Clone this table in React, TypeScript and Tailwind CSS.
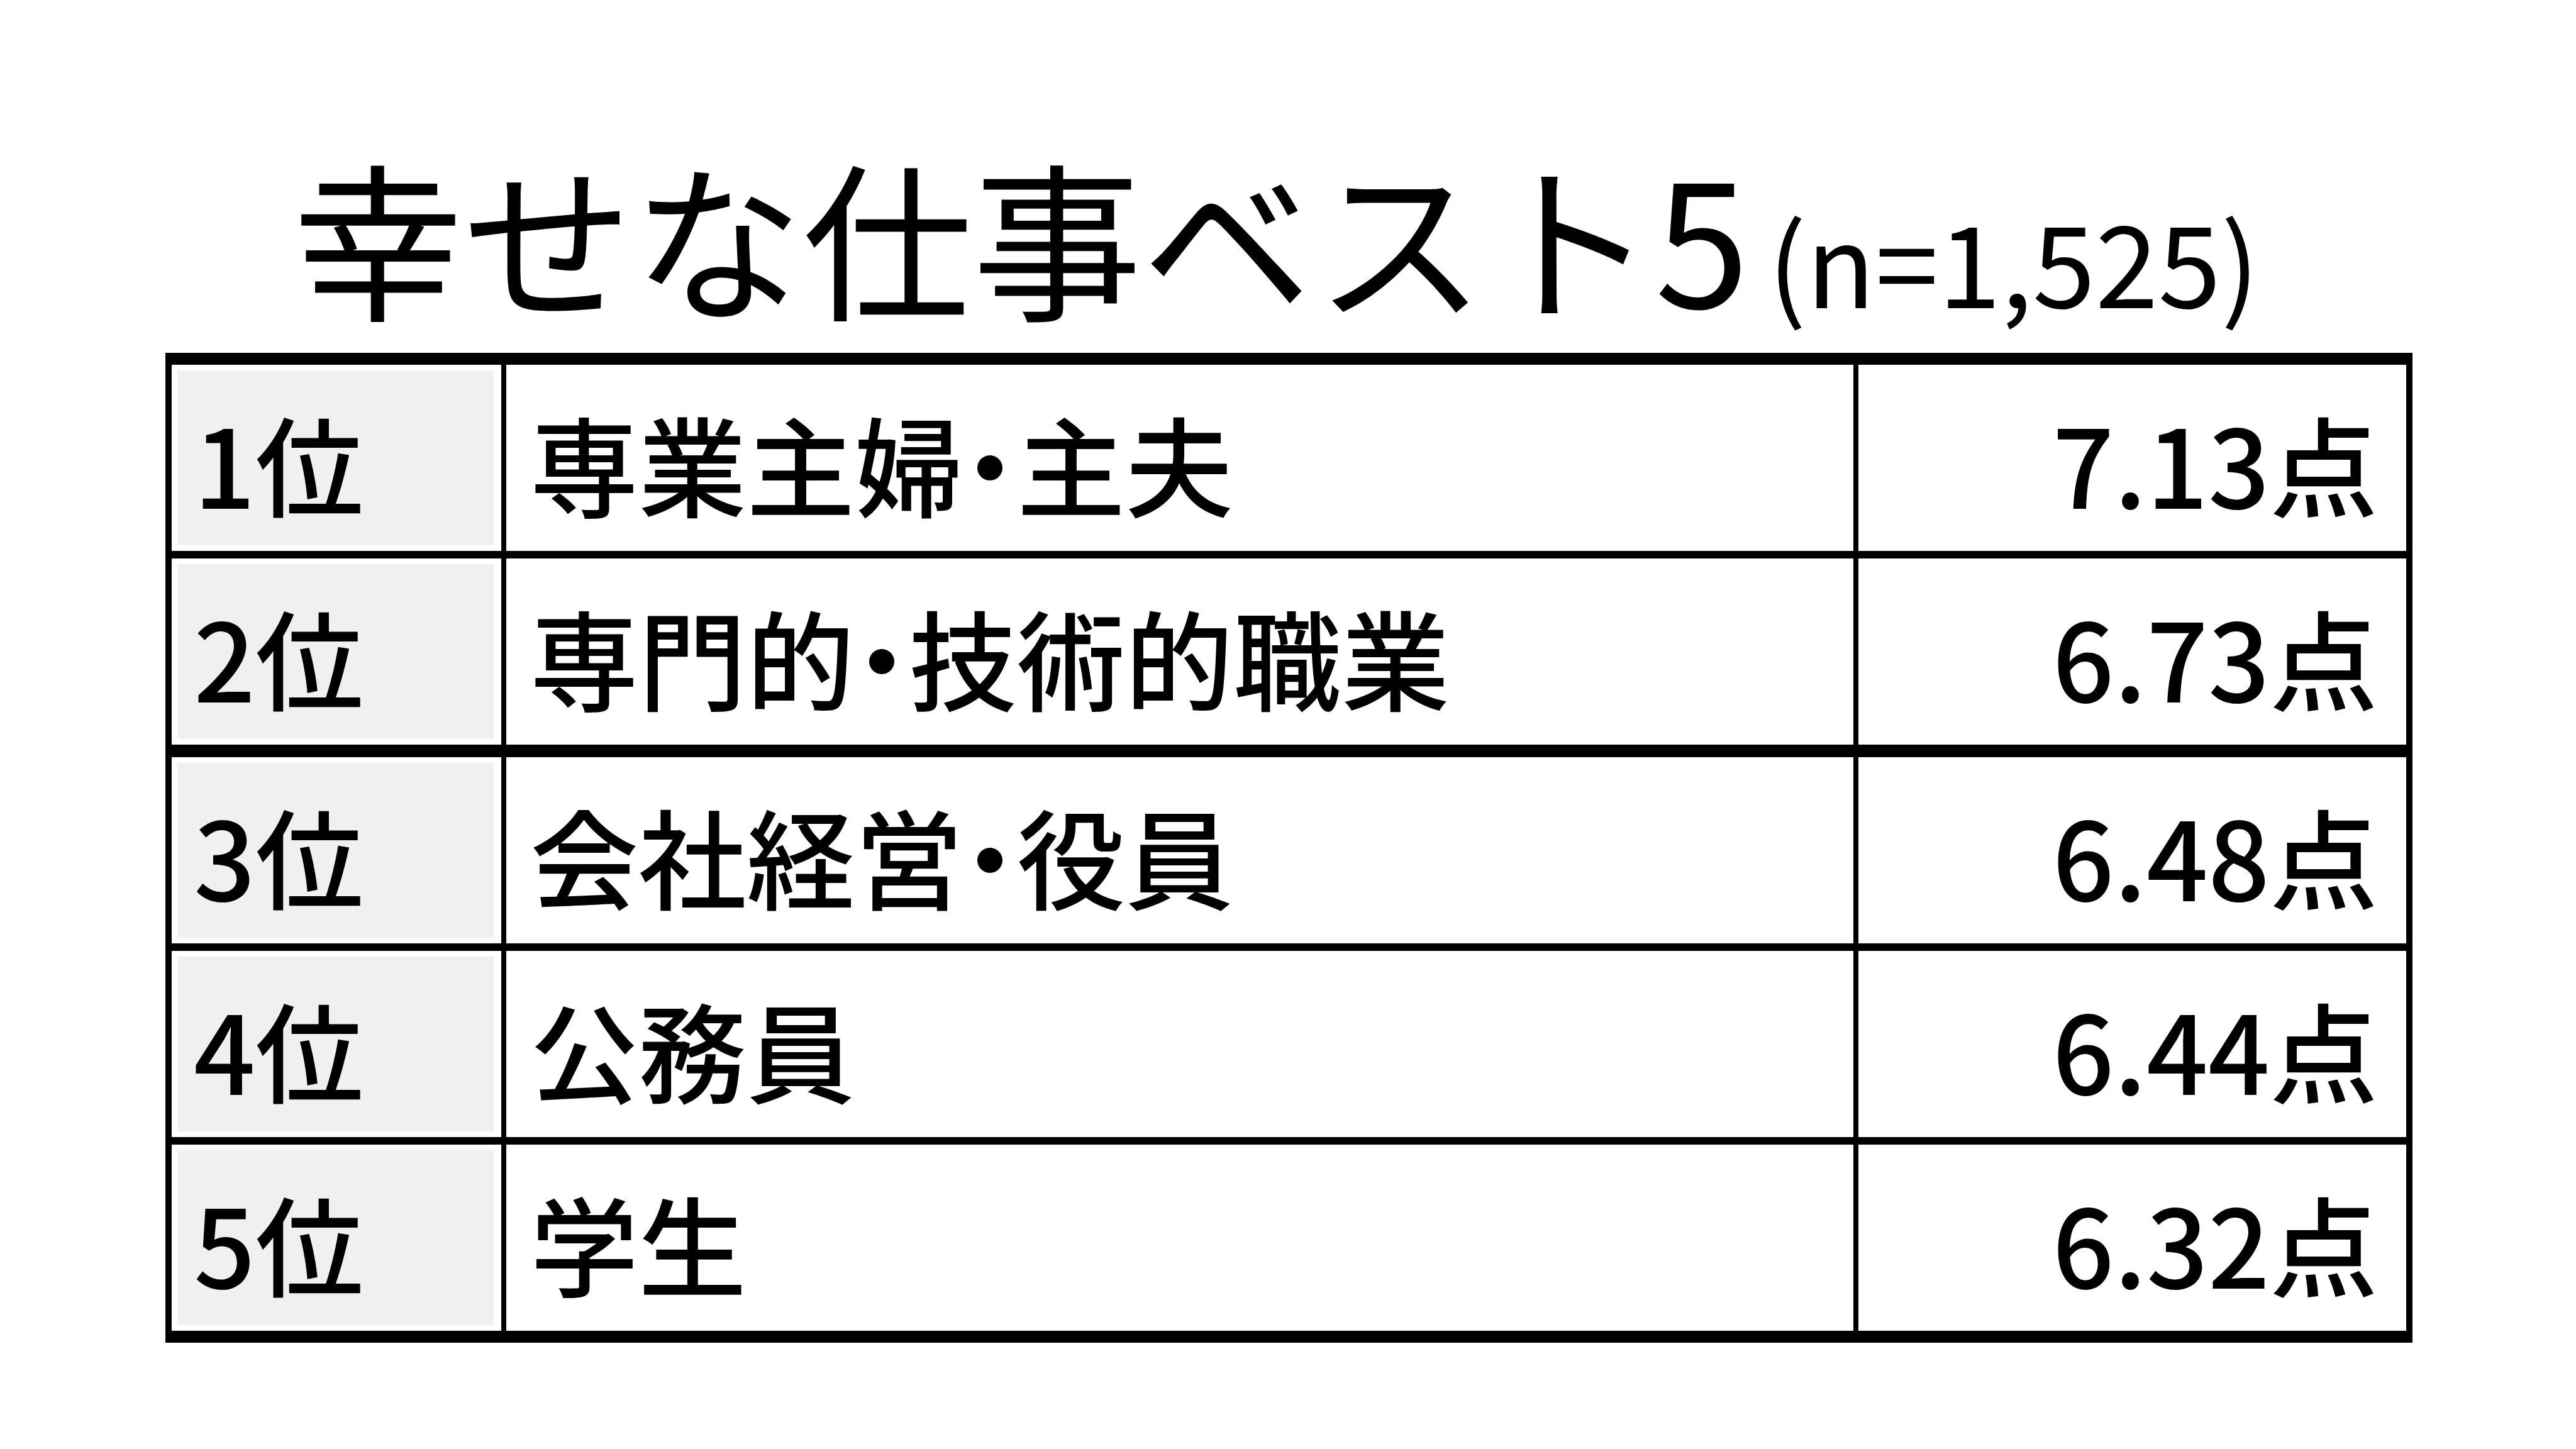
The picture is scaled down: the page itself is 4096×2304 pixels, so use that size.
import React from 'react'

const font = "font-['Noto_Sans_CJK_JP','Noto_Sans',sans-serif]"

const rows = [
  { rank: '1位', job: '専業主婦・主夫', score: '7.13点', line: '' },
  { rank: '2位', job: '専門的・技術的職業', score: '6.73点', line: 'border-t-[12px] border-black' },
  { rank: '3位', job: '会社経営・役員', score: '6.48点', line: 'border-t-[20px] border-black' },
  { rank: '4位', job: '公務員', score: '6.44点', line: 'border-t-[12px] border-black' },
  { rank: '5位', job: '学生', score: '6.32点', line: 'border-t-[12px] border-black' },
]

export default function App() {
  return (
    <div className={`w-[4096px] h-[2304px] bg-white text-black pt-[238px] pl-[263px] ${font}`}>
      {/* title */}
      <div className="flex items-baseline ml-[203px] mb-[53px] leading-none">
        <span className="text-[270px]">幸せな仕事ベスト5</span>
        <span className="text-[180px] ml-[30px]">(n=1,525)</span>
      </div>

      {/* ranking table */}
      <div className="w-[3573px] border-x-[10px] border-y-[19px] border-black flex flex-col [font-feature-settings:'palt']">
        {rows.map(r => (
          <div key={r.rank} className={`grid grid-cols-[532px_2150px_871px] h-[296px] box-content divide-x-[8px] divide-black ${r.line}`}>
            <div className="p-[9px] pr-[12px] bg-white">
              <div className="h-full bg-[#f0f0f0] flex items-center pl-[26px] pt-[12px] text-[172px] leading-none font-medium">{r.rank}</div>
            </div>
            <div className="flex items-center pl-[38px] pt-[12px] text-[172px] leading-none font-medium">{r.job}</div>
            <div className="flex items-center justify-end pr-[45px] pt-[12px] text-[172px] leading-none font-medium">{r.score}</div>
          </div>
        ))}
      </div>
    </div>
  )
}
